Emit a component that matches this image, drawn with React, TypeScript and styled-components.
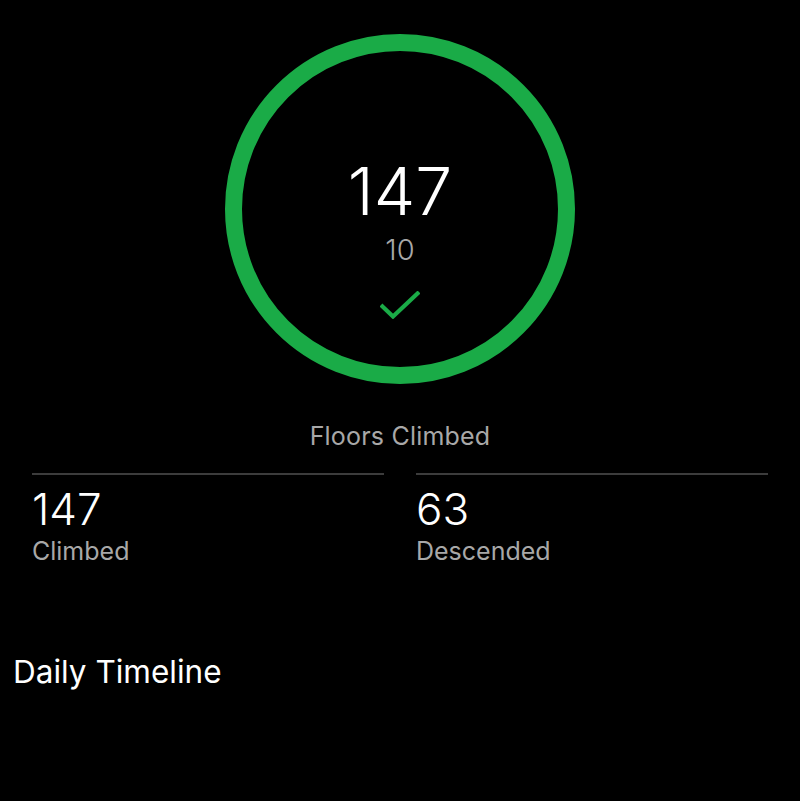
import styled, { createGlobalStyle } from "styled-components";

const GlobalStyle = createGlobalStyle`
  html, body {
    margin: 0;
    padding: 0;
    background: #000;
  }
  body {
    font-family: Inter, "Noto Sans", sans-serif;
    color: #fff;
  }
`;

interface Stat {
  value: number;
  label: string;
}

const stats: Stat[] = [
  { value: 147, label: "Climbed" },
  { value: 63, label: "Descended" },
];

const App: React.FC = () => {
  return (
    <>
      <GlobalStyle />
      <Page>
        <Ring>
          <Total>147</Total>
          <Goal>10</Goal>
          <Check width="40" height="28" viewBox="0 0 40 28">
            <path
              d="M2.5 15.5 L13 25.5 L37.5 2.5"
              fill="none"
              stroke="#1aab47"
              strokeWidth="4.2"
              strokeLinecap="square"
            />
          </Check>
        </Ring>
        <Caption>Floors Climbed</Caption>
        <Stats>
          {stats.map((s) => (
            <StatCol key={s.label}>
              <StatValue>{s.value}</StatValue>
              <StatLabel>{s.label}</StatLabel>
            </StatCol>
          ))}
        </Stats>
        <Heading>Daily Timeline</Heading>
      </Page>
    </>
  );
};

export default App;

const Page = styled.div`
  width: 800px;
  height: 801px;
  padding-top: 34px;
  box-sizing: border-box;
  display: flex;
  flex-direction: column;
  background: #000;
`;

const Ring = styled.div`
  width: 350px;
  height: 350px;
  box-sizing: border-box;
  margin: 0 auto;
  border: 17px solid #1aab47;
  border-radius: 50%;
  display: flex;
  flex-direction: column;
  align-items: center;
  padding-top: 107px;
`;

const Total = styled.div`
  font-size: 66px;
  line-height: 66px;
  font-weight: 300;
  color: #fff;
`;

const Goal = styled.div`
  margin-top: 11px;
  font-size: 29px;
  line-height: 29px;
  font-weight: 300;
  color: #a8a8a8;
`;

const Check = styled.svg`
  margin-top: 27px;
  display: block;
`;

const Caption = styled.div`
  margin-top: 40px;
  text-align: center;
  font-size: 25px;
  line-height: 24px;
  letter-spacing: 0.2px;
  color: #a8a8a8;
`;

const Stats = styled.div`
  margin-top: 25px;
  padding: 0 32px;
  display: grid;
  grid-template-columns: 1fr 1fr;
  gap: 32px;
`;

const StatCol = styled.div`
  border-top: 2px solid #3c3c3c;
  padding-top: 12px;
  display: flex;
  flex-direction: column;
`;

const StatValue = styled.div`
  font-size: 44px;
  line-height: 44px;
  font-weight: 300;
  color: #fff;
`;

const StatLabel = styled.div`
  margin-top: 8px;
  font-size: 25px;
  line-height: 25px;
  color: #a8a8a8;
`;

const Heading = styled.div`
  margin-top: 92px;
  padding-left: 13px;
  font-size: 31.5px;
  line-height: 32px;
  color: #fff;
`;
